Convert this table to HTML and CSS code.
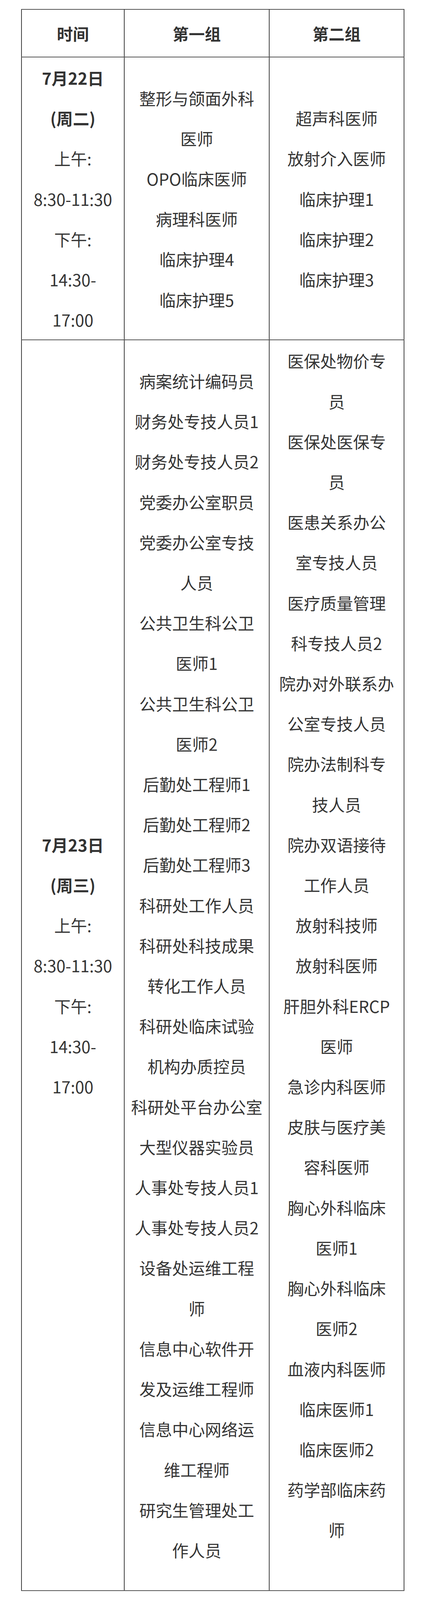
FILE: index.html
```html
<!DOCTYPE html>
<html lang="zh-CN">
<head>
<meta charset="utf-8">
<title>面试安排</title>
<link rel="stylesheet" href="styles.css">
</head>
<body>
<table class="schedule">
  <colgroup>
    <col class="c-time">
    <col class="c-g1">
    <col class="c-g2">
  </colgroup>
  <thead>
    <tr>
      <th>时间</th>
      <th>第一组</th>
      <th>第二组</th>
    </tr>
  </thead>
  <tbody>
    <tr>
      <td class="time">
        <div class="ln b">7月22日</div>
        <div class="ln b">(周二)</div>
        <div class="ln">上午:</div>
        <div class="ln">8:30-11:30</div>
        <div class="ln">下午:</div>
        <div class="ln">14:30-</div>
        <div class="ln">17:00</div>
      </td>
      <td>
        <div class="ln">整形与颌面外科</div>
        <div class="ln">医师</div>
        <div class="ln">OPO临床医师</div>
        <div class="ln">病理科医师</div>
        <div class="ln">临床护理4</div>
        <div class="ln">临床护理5</div>
      </td>
      <td>
        <div class="ln">超声科医师</div>
        <div class="ln">放射介入医师</div>
        <div class="ln">临床护理1</div>
        <div class="ln">临床护理2</div>
        <div class="ln">临床护理3</div>
      </td>
    </tr>
    <tr>
      <td class="time">
        <div class="ln b">7月23日</div>
        <div class="ln b">(周三)</div>
        <div class="ln">上午:</div>
        <div class="ln">8:30-11:30</div>
        <div class="ln">下午:</div>
        <div class="ln">14:30-</div>
        <div class="ln">17:00</div>
      </td>
      <td>
        <div class="ln">病案统计编码员</div>
        <div class="ln">财务处专技人员1</div>
        <div class="ln">财务处专技人员2</div>
        <div class="ln">党委办公室职员</div>
        <div class="ln">党委办公室专技</div>
        <div class="ln">人员</div>
        <div class="ln">公共卫生科公卫</div>
        <div class="ln">医师1</div>
        <div class="ln">公共卫生科公卫</div>
        <div class="ln">医师2</div>
        <div class="ln">后勤处工程师1</div>
        <div class="ln">后勤处工程师2</div>
        <div class="ln">后勤处工程师3</div>
        <div class="ln">科研处工作人员</div>
        <div class="ln">科研处科技成果</div>
        <div class="ln">转化工作人员</div>
        <div class="ln">科研处临床试验</div>
        <div class="ln">机构办质控员</div>
        <div class="ln">科研处平台办公室</div>
        <div class="ln">大型仪器实验员</div>
        <div class="ln">人事处专技人员1</div>
        <div class="ln">人事处专技人员2</div>
        <div class="ln">设备处运维工程</div>
        <div class="ln">师</div>
        <div class="ln">信息中心软件开</div>
        <div class="ln">发及运维工程师</div>
        <div class="ln">信息中心网络运</div>
        <div class="ln">维工程师</div>
        <div class="ln">研究生管理处工</div>
        <div class="ln">作人员</div>
      </td>
      <td class="g2-long">
        <div class="ln">医保处物价专</div>
        <div class="ln">员</div>
        <div class="ln">医保处医保专</div>
        <div class="ln">员</div>
        <div class="ln">医患关系办公</div>
        <div class="ln">室专技人员</div>
        <div class="ln">医疗质量管理</div>
        <div class="ln">科专技人员2</div>
        <div class="ln">院办对外联系办</div>
        <div class="ln">公室专技人员</div>
        <div class="ln">院办法制科专</div>
        <div class="ln">技人员</div>
        <div class="ln">院办双语接待</div>
        <div class="ln">工作人员</div>
        <div class="ln">放射科技师</div>
        <div class="ln">放射科医师</div>
        <div class="ln">肝胆外科ERCP</div>
        <div class="ln">医师</div>
        <div class="ln">急诊内科医师</div>
        <div class="ln">皮肤与医疗美</div>
        <div class="ln">容科医师</div>
        <div class="ln">胸心外科临床</div>
        <div class="ln">医师1</div>
        <div class="ln">胸心外科临床</div>
        <div class="ln">医师2</div>
        <div class="ln">血液内科医师</div>
        <div class="ln">临床医师1</div>
        <div class="ln">临床医师2</div>
        <div class="ln">药学部临床药</div>
        <div class="ln">师</div>
      </td>
    </tr>
  </tbody>
</table>
</body>
</html>
```
FILE: styles.css
```css
html, body {
  margin: 0;
  padding: 0;
  background: #ffffff;
}

body {
  font-family: "Noto Sans CJK SC", "Noto Sans", sans-serif;
  color: #353535;
}

.schedule {
  margin: 23px 0 0 54px;
  width: 979px;
  border-collapse: collapse;
  table-layout: fixed;
}

.c-time { width: 263px; }
.c-g1 { width: 371px; }
.c-g2 { width: 345px; }

.schedule th,
.schedule td {
  border-left: 2px solid #3f3f3f;
  border-right: 2px solid #3f3f3f;
  border-top: 2px solid #555555;
  border-bottom: 2px solid #555555;
  text-align: center;
  vertical-align: middle;
  padding: 0;
}

.schedule th {
  height: 120px;
  font-size: 41px;
  font-weight: 700;
  color: #333333;
  line-height: 103px;
}

.schedule td {
  font-size: 42px;
  font-weight: 400;
}

/* second group of 23 July sits half a line above centre */
.schedule td.g2-long {
  padding-bottom: 103.2px;
}

.ln {
  line-height: 103.2px;
  white-space: nowrap;
}

.ln.b {
  font-weight: 700;
  color: #333333;
}
```
